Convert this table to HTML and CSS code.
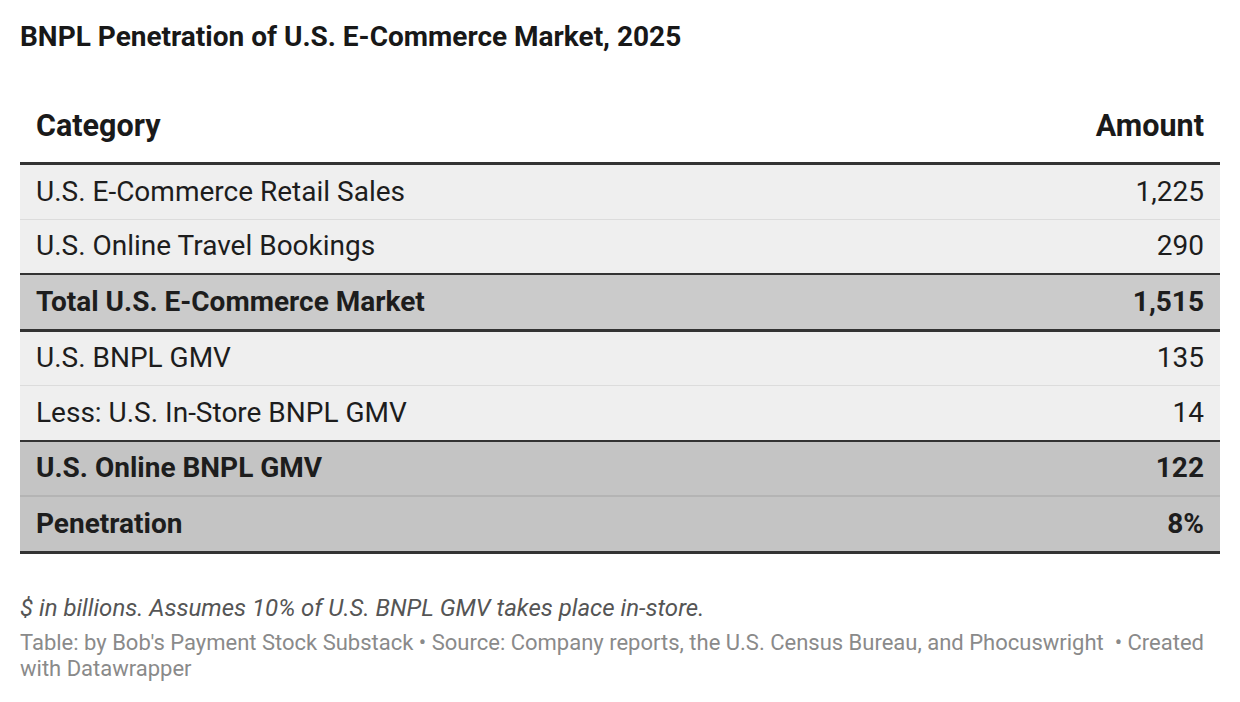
FILE: index.html
```html
<!DOCTYPE html>
<html>
<head>
<meta charset="utf-8">
<link rel="stylesheet" href="styles.css">
</head>
<body>
<div class="chart">
  <h1 class="title">BNPL Penetration of U.S. E-Commerce Market, 2025</h1>
  <table class="tbl">
    <thead>
      <tr><th class="c-cat">Category</th><th class="c-amt">Amount</th></tr>
    </thead>
    <tbody>
      <tr class="r-light"><td>U.S. E-Commerce Retail Sales</td><td class="c-amt">1,225</td></tr>
      <tr class="r-light r-endgroup"><td>U.S. Online Travel Bookings</td><td class="c-amt">290</td></tr>
      <tr class="r-total r-thick"><td>Total U.S. E-Commerce Market</td><td class="c-amt">1,515</td></tr>
      <tr class="r-light"><td>U.S. BNPL GMV</td><td class="c-amt">135</td></tr>
      <tr class="r-light r-endgroup"><td>Less: U.S. In-Store BNPL GMV</td><td class="c-amt">14</td></tr>
      <tr class="r-dark r-mid"><td>U.S. Online BNPL GMV</td><td class="c-amt">122</td></tr>
      <tr class="r-dark r-last"><td>Penetration</td><td class="c-amt">8%</td></tr>
    </tbody>
  </table>
  <p class="notes">$ in billions. Assumes 10% of U.S. BNPL GMV takes place in-store.</p>
  <p class="source">Table: by Bob's Payment Stock Substack • Source: Company reports, the U.S. Census Bureau, and Phocuswright &nbsp;• Created with Datawrapper</p>
</div>
</body>
</html>
```
FILE: styles.css
```css
html, body {
  margin: 0;
  padding: 0;
  background: #ffffff;
}
body {
  font-family: Roboto, "Liberation Sans", sans-serif;
  color: #1d1d1d;
}
.chart {
  padding: 20px 20px 0 20px;
}
.title {
  margin: 0;
  font-size: 28px;
  font-weight: 700;
  line-height: 34px;
  color: #181818;
}
.tbl {
  width: 100%;
  border-collapse: collapse;
  margin-top: 55px;
  font-size: 28px;
}
.tbl th {
  font-weight: 700;
  font-size: 30.5px;
  text-align: left;
  padding: 0 16px 19px 16px;
  line-height: 34px;
  border-bottom: 3px solid #333333;
  color: #1a1a1a;
}
.tbl th.c-amt, .tbl td.c-amt {
  text-align: right;
}
.tbl td {
  padding: 0 16px;
  height: 53.5px;
  line-height: 30px;
  border-bottom: 1px solid #dcdcdc;
}
.r-light td {
  background: #efefef;
}
.r-endgroup td {
  border-bottom: 2px solid #333333;
}
.r-total td {
  background: #cbcbcb;
  font-weight: 700;
}
.r-thick td {
  border-bottom: 3px solid #333333;
}
.r-dark td {
  background: #c4c4c4;
  font-weight: 700;
}
.r-mid td {
  border-bottom: 2px solid #b4b4b4;
}
.r-last td {
  border-bottom: 3px solid #333333;
}
.notes {
  margin: 39px 0 0 0;
  font-size: 24px;
  font-style: italic;
  line-height: 30px;
  color: #555555;
}
.source {
  margin: 7px 0 0 0;
  font-size: 22px;
  line-height: 26px;
  color: #8a8a8a;
}
```
